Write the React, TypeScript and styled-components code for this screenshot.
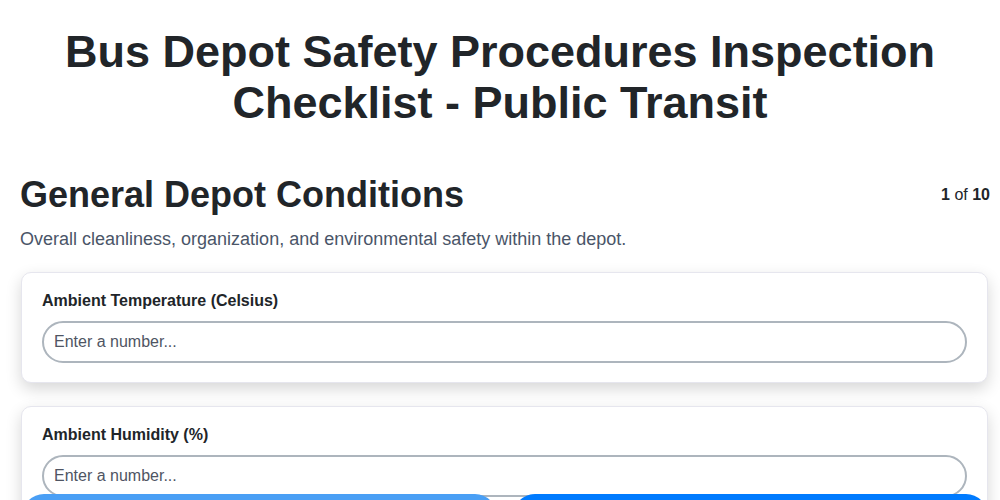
import React from "react";
import styled, { createGlobalStyle } from "styled-components";

const GlobalStyle = createGlobalStyle`
  body {
    margin: 0;
    background: #ffffff;
    font-family: "Liberation Sans", Arial, sans-serif;
    color: #212529;
  }
`;

const Page = styled.div`
  padding: 0 10px 80px 20px;
`;

const Title = styled.h1`
  font-size: 45px;
  line-height: 51px;
  font-weight: 700;
  text-align: center;
  margin: 26px 0 0;
  padding: 0 10px 0 0;
  color: #212529;
`;

const SectionHeader = styled.div`
  display: flex;
  justify-content: space-between;
  align-items: flex-start;
  margin-top: 46px;
`;

const SectionTitle = styled.h2`
  font-size: 36px;
  line-height: 42px;
  font-weight: 700;
  margin: 0;
  color: #212529;
`;

const Counter = styled.div`
  font-size: 16px;
  line-height: 20px;
  margin-top: 11px;
  color: #212529;

  b {
    font-weight: 700;
  }
`;

const Description = styled.p`
  font-size: 18px;
  line-height: 24px;
  color: #4a5568;
  margin: 11px 0 21px;
`;

const CardList = styled.div`
  display: flex;
  flex-direction: column;
  gap: 23px;
  margin: 0 2px 0 1px;
`;

const Card = styled.div`
  background: #ffffff;
  border: 1px solid #e6e6ee;
  border-radius: 10px;
  box-shadow: 0 6px 16px rgba(0, 0, 0, 0.16);
  padding: 18px 20px 19px;
`;

const Label = styled.label`
  display: block;
  font-size: 16px;
  font-weight: 700;
  line-height: 20px;
  color: #212529;
  margin-bottom: 10px;
`;

const Input = styled.input`
  box-sizing: border-box;
  width: 100%;
  height: 42px;
  border: 2px solid #adb5bd;
  border-radius: 21px;
  padding: 0 10px;
  font-family: "Liberation Sans", Arial, sans-serif;
  font-size: 16px;
  color: #212529;
  outline: none;
  background: #fff;

  &::placeholder {
    color: #4f5563;
  }
`;

const NavBar = styled.div`
  position: fixed;
  left: 22px;
  right: 12px;
  top: 494px;
  display: flex;
  gap: 16px;
`;

const NavButton = styled.button<{ $primary?: boolean }>`
  flex: 1;
  height: 46px;
  border: none;
  border-radius: 22px;
  background: ${(p) => (p.$primary ? "#007bff" : "#4a9ff5")};
  color: #fff;
  font-family: "Liberation Sans", Arial, sans-serif;
  font-size: 16px;
  font-weight: 700;
`;

const fields = ["Ambient Temperature (Celsius)", "Ambient Humidity (%)"];

export default function App() {
  return (
    <>
      <GlobalStyle />
      <Page>
        <Title>Bus Depot Safety Procedures Inspection Checklist - Public Transit</Title>
        <SectionHeader>
          <SectionTitle>General Depot Conditions</SectionTitle>
          <Counter>
            <b>1</b> of <b>10</b>
          </Counter>
        </SectionHeader>
        <Description>
          Overall cleanliness, organization, and environmental safety within the depot.
        </Description>
        <CardList>
          {fields.map((f) => (
            <Card key={f}>
              <Label>{f}</Label>
              <Input type="number" placeholder="Enter a number..." />
            </Card>
          ))}
        </CardList>
      </Page>
      <NavBar>
        <NavButton>Previous</NavButton>
        <NavButton $primary>Next</NavButton>
      </NavBar>
    </>
  );
}
